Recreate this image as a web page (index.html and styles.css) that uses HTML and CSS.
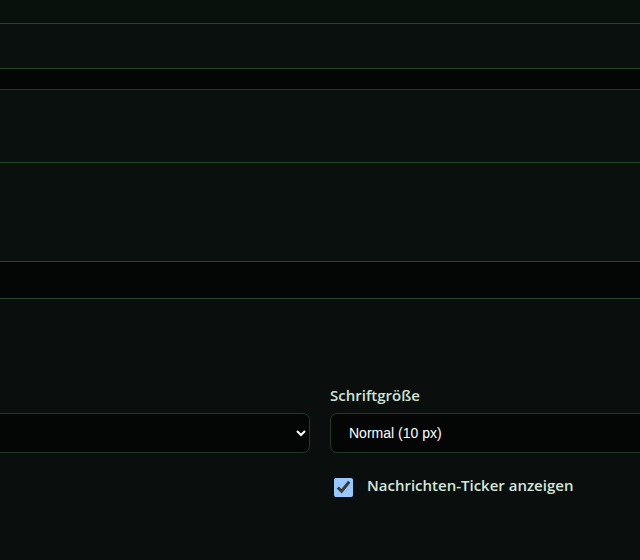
FILE: index.html
```html
<!DOCTYPE html>
<html lang="de">
<head>
    <meta charset="UTF-8">
    <meta name="viewport" content="width=device-width, initial-scale=1.0">
    <title>Einstellungen</title>
    <link rel="stylesheet" href="styles.css">
</head>
<body>
    <div class="topbar"></div>
    <div class="panel panel-short"></div>
    <div class="strip strip-thin"></div>
    <div class="panel panel-mid"></div>
    <div class="panel panel-tall"></div>
    <div class="strip strip-wide"></div>

    <section class="settings">
        <div class="settings-grid">
            <div class="field">
                <label class="field-label" for="theme">Farbschema</label>
                <select class="field-select" id="theme">
                    <option></option>
                </select>
            </div>
            <div class="field">
                <label class="field-label" for="fontsize">Schriftgröße</label>
                <select class="field-select" id="fontsize">
                    <option>Normal (10 px)</option>
                    <option>Groß (12 px)</option>
                </select>
                <label class="check-row">
                    <input type="checkbox" class="check" checked>
                    <span>Nachrichten-Ticker anzeigen</span>
                </label>
            </div>
        </div>
    </section>
</body>
</html>
```

FILE: styles.css
```css
html {
    color-scheme: dark;
}
body {
    margin: 0;
    background: #0a0f0d;
    font-family: "Open Sans", "Liberation Sans", sans-serif;
    color: #d4e6d8;
    overflow: hidden;
}
.topbar {
    height: 23px;
    background: #08110b;
    border-bottom: 1px solid #1d4a2a;
}
.panel {
    background: #0a100d;
    border-bottom: 1px solid #1d4a2a;
}
.panel-short {
    height: 44px;
}
.panel-mid {
    height: 72px;
}
.panel-tall {
    height: 98px;
}
.strip {
    background: #030604;
    border-bottom: 1px solid #1f3b28;
}
.strip-thin {
    height: 20px;
}
.strip-wide {
    height: 36px;
    border-bottom-color: #1d4a2a;
}
.settings {
    padding-top: 86px;
}
.settings-grid {
    display: grid;
    grid-template-columns: 640px 640px;
    gap: 20px;
    margin-left: -330px;
}
.field {
    display: flex;
    flex-direction: column;
}
.field-label {
    align-self: flex-start;
    font-size: 15px;
    font-weight: 600;
    line-height: 20px;
    color: #cfe3d3;
    margin-bottom: 8px;
}
.field-select {
    height: 40px;
    background: #030604;
    border: 1px solid #1f3b28;
    border-radius: 7px;
    color: #ffffff;
    font-family: "Liberation Sans", Arial, sans-serif;
    font-size: 14px;
    padding: 0 14px;
}
.check-row {
    display: flex;
    align-items: flex-start;
    align-self: flex-start;
    gap: 14px;
    margin-top: 22px;
    padding-left: 4px;
    font-size: 15px;
    font-weight: 600;
    line-height: 20px;
    color: #d4e6d8;
}
.check {
    width: 19px;
    height: 19px;
    margin: 3px 0 0;
}
```
